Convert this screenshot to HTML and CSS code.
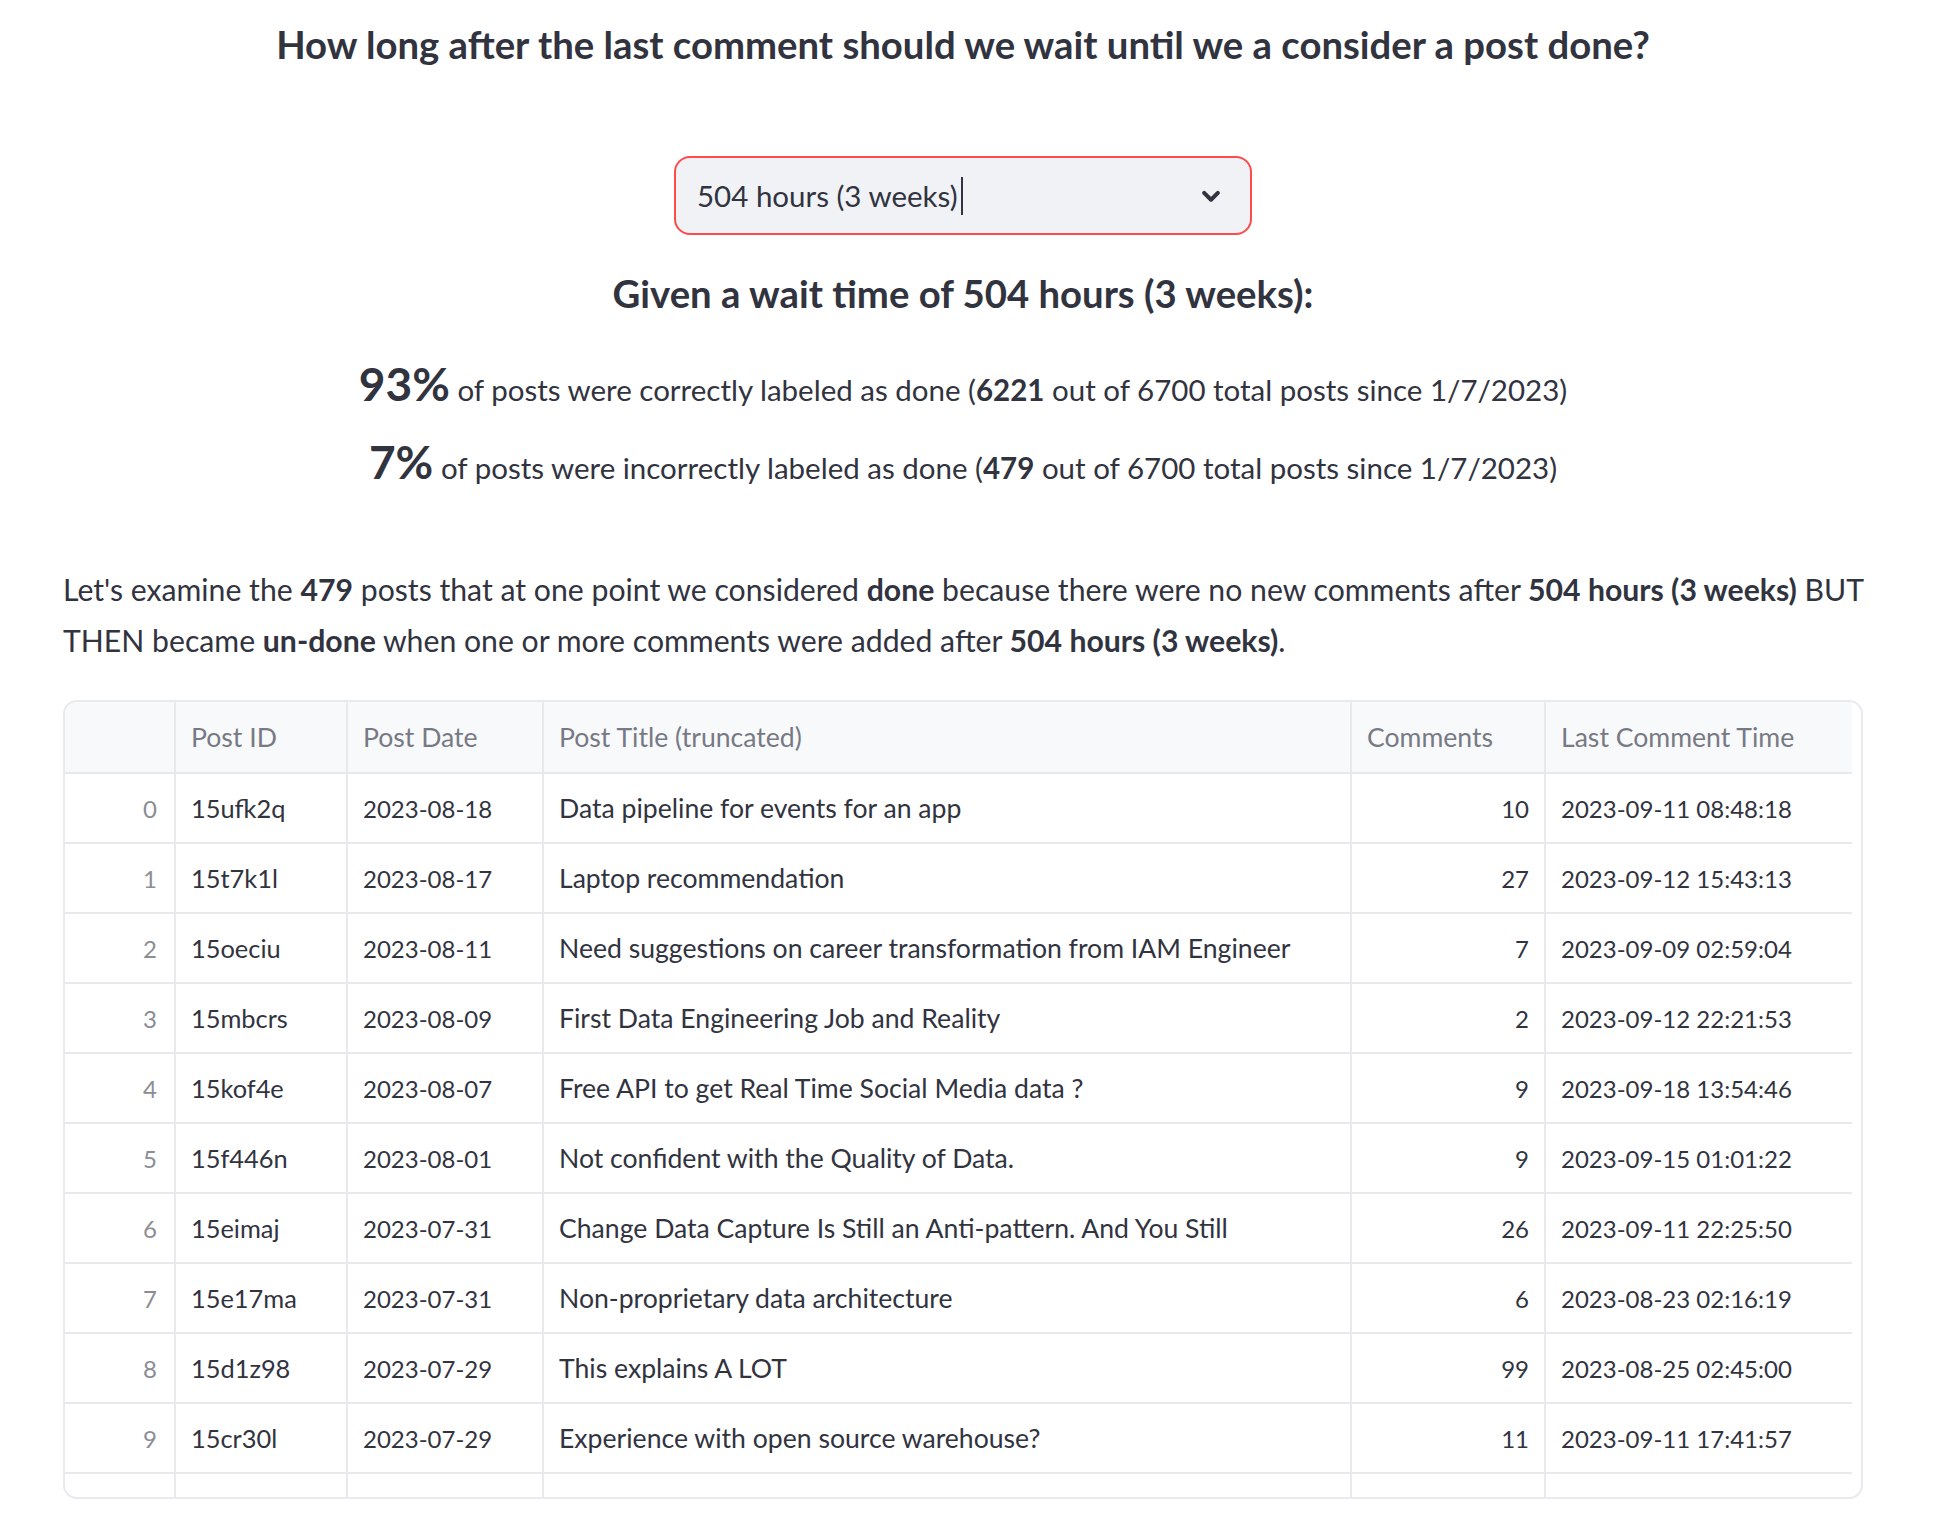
FILE: index.html
```html
<!DOCTYPE html>
<html lang="en">
<head>
<meta charset="utf-8">
<title>Post done analysis</title>
<link rel="stylesheet" href="styles.css">
</head>
<body>
<main class="main">
  <h3 class="title">How long after the last comment should we wait until we a consider a post done?</h3>

  <div class="select-wrap">
    <div class="select">
      <span class="select-value">504 hours (3 weeks)</span><span class="caret"></span>
      <svg class="chevron" viewBox="0 0 24 24" width="30" height="30" aria-hidden="true">
        <path d="M6.5 9.5l5.5 5.5 5.5-5.5" fill="none" stroke="#31333f" stroke-width="3.2" stroke-linecap="round" stroke-linejoin="round"/>
      </svg>
    </div>
  </div>

  <h3 class="subtitle">Given a wait time of 504 hours (3 weeks):</h3>

  <p class="stat"><span class="pct">93%</span> of posts were correctly labeled as done (<b>6221</b> out of 6700 total posts since 1/7/2023)</p>
  <p class="stat stat-second"><span class="pct">7%</span> of posts were incorrectly labeled as done (<b>479</b> out of 6700 total posts since 1/7/2023)</p>

  <p class="para">Let's examine the <b>479</b> posts that at one point we considered <b>done</b> because there were no new comments after <b>504 hours (3 weeks)</b> BUT THEN became <b>un-done</b> when one or more comments were added after <b>504 hours (3 weeks)</b>.</p>

  <div class="grid-frame">
    <table class="grid">
      <colgroup>
        <col class="c-idx"><col class="c-id"><col class="c-date"><col class="c-title"><col class="c-num"><col class="c-time">
      </colgroup>
      <thead>
        <tr><th></th><th>Post ID</th><th>Post Date</th><th>Post Title (truncated)</th><th>Comments</th><th>Last Comment Time</th></tr>
      </thead>
      <tbody>
        <tr><td class="idx">0</td><td class="pid">15ufk2q</td><td class="mono">2023-08-18</td><td>Data pipeline for events for an app</td><td class="num">10</td><td class="mono">2023-09-11 08:48:18</td></tr>
        <tr><td class="idx">1</td><td class="pid">15t7k1l</td><td class="mono">2023-08-17</td><td>Laptop recommendation</td><td class="num">27</td><td class="mono">2023-09-12 15:43:13</td></tr>
        <tr><td class="idx">2</td><td class="pid">15oeciu</td><td class="mono">2023-08-11</td><td>Need suggestions on career transformation from IAM Engineer</td><td class="num">7</td><td class="mono">2023-09-09 02:59:04</td></tr>
        <tr><td class="idx">3</td><td class="pid">15mbcrs</td><td class="mono">2023-08-09</td><td>First Data Engineering Job and Reality</td><td class="num">2</td><td class="mono">2023-09-12 22:21:53</td></tr>
        <tr><td class="idx">4</td><td class="pid">15kof4e</td><td class="mono">2023-08-07</td><td>Free API to get Real Time Social Media data ?</td><td class="num">9</td><td class="mono">2023-09-18 13:54:46</td></tr>
        <tr><td class="idx">5</td><td class="pid">15f446n</td><td class="mono">2023-08-01</td><td>Not confident with the Quality of Data.</td><td class="num">9</td><td class="mono">2023-09-15 01:01:22</td></tr>
        <tr><td class="idx">6</td><td class="pid">15eimaj</td><td class="mono">2023-07-31</td><td>Change Data Capture Is Still an Anti-pattern. And You Still</td><td class="num">26</td><td class="mono">2023-09-11 22:25:50</td></tr>
        <tr><td class="idx">7</td><td class="pid">15e17ma</td><td class="mono">2023-07-31</td><td>Non-proprietary data architecture</td><td class="num">6</td><td class="mono">2023-08-23 02:16:19</td></tr>
        <tr><td class="idx">8</td><td class="pid">15d1z98</td><td class="mono">2023-07-29</td><td>This explains A LOT</td><td class="num">99</td><td class="mono">2023-08-25 02:45:00</td></tr>
        <tr><td class="idx">9</td><td class="pid">15cr30l</td><td class="mono">2023-07-29</td><td>Experience with open source warehouse?</td><td class="num">11</td><td class="mono">2023-09-11 17:41:57</td></tr>
        <tr><td class="idx">10</td><td class="pid">15b1k5t</td><td class="mono">2023-07-27</td><td>Why do people decide with both Snowflake and Databricks as the cloud</td><td class="num">14</td><td class="mono">2023-09-02 10:12:44</td></tr>
      </tbody>
    </table>
  </div>
</main>
</body>
</html>
```

FILE: styles.css
```css
html, body {
  margin: 0;
  padding: 0;
  background: #ffffff;
}

body {
  font-family: Lato, "Open Sans", sans-serif;
  color: #31333f;
}

.main {
  width: 1800px;
  padding: 0 73px 0 63px;
  box-sizing: content-box;
}

.title {
  margin: 16px -20px 0;
  font-size: 38.3px;
  line-height: 56px;
  font-weight: 700;
  text-align: center;
}

.select-wrap {
  margin-top: 84px;
  display: flex;
  justify-content: center;
}

.select {
  width: 578px;
  height: 79px;
  box-sizing: border-box;
  border: 2px solid #ff4b4b;
  border-radius: 16px;
  background: #f0f2f6;
  display: flex;
  align-items: center;
  padding: 0 24px 0 21px;
  font-size: 29.5px;
}

.select-value {
  white-space: nowrap;
}

.caret {
  display: inline-block;
  width: 2px;
  height: 38px;
  background: #31333f;
  margin-left: 3px;
}

.chevron {
  margin-left: auto;
}

.subtitle {
  margin: 30px 0 0;
  font-size: 38.3px;
  line-height: 56px;
  font-weight: 700;
  text-align: center;
}

.stat {
  margin: 37px 0 0;
  font-size: 29.5px;
  line-height: 64px;
  text-align: center;
}

.stat-second {
  margin-top: 14px;
}

.stat b {
  font-weight: 700;
}

.pct {
  font-size: 46px;
  line-height: 40px;
  font-weight: 700;
}

.para {
  margin: 64px -30px 0 0;
  font-size: 30.2px;
  line-height: 51px;
}

.para b {
  font-weight: 700;
}

.grid-frame {
  margin-top: 34px;
  width: 1800px;
  height: 799px;
  box-sizing: border-box;
  border: 2px solid #e9eaed;
  border-radius: 14px;
  overflow: hidden;
  padding-right: 11px;
}

.grid {
  border-collapse: collapse;
  table-layout: fixed;
  width: 1787px;
  font-size: 26.6px;
}

.c-idx { width: 110px; }
.c-id { width: 172px; }
.c-date { width: 196px; }
.c-title { width: 808px; }
.c-num { width: 194px; }
.c-time { width: 307px; }

.grid th,
.grid td {
  border: 2px solid #e8e9ec;
  padding: 0 15px;
  text-align: left;
  white-space: nowrap;
  overflow: hidden;
}

.grid tr:first-child th { border-top: none; }
.grid th:first-child,
.grid td:first-child { border-left: none; }
.grid th:last-child,
.grid td:last-child { border-right: none; }

.grid th {
  height: 70px;
  background: #f8f9fb;
  color: #777a84;
  font-weight: 400;
}

.grid td {
  height: 68px;
  color: #31333f;
}

.grid td.mono {
  font-size: 24px;
}

.grid td.pid {
  font-size: 25.4px;
}

.grid td.idx {
  text-align: right;
  color: #8b8d95;
  padding-right: 17px;
  font-size: 24px;
}

.grid td.num {
  text-align: right;
  font-size: 24px;
}
```
